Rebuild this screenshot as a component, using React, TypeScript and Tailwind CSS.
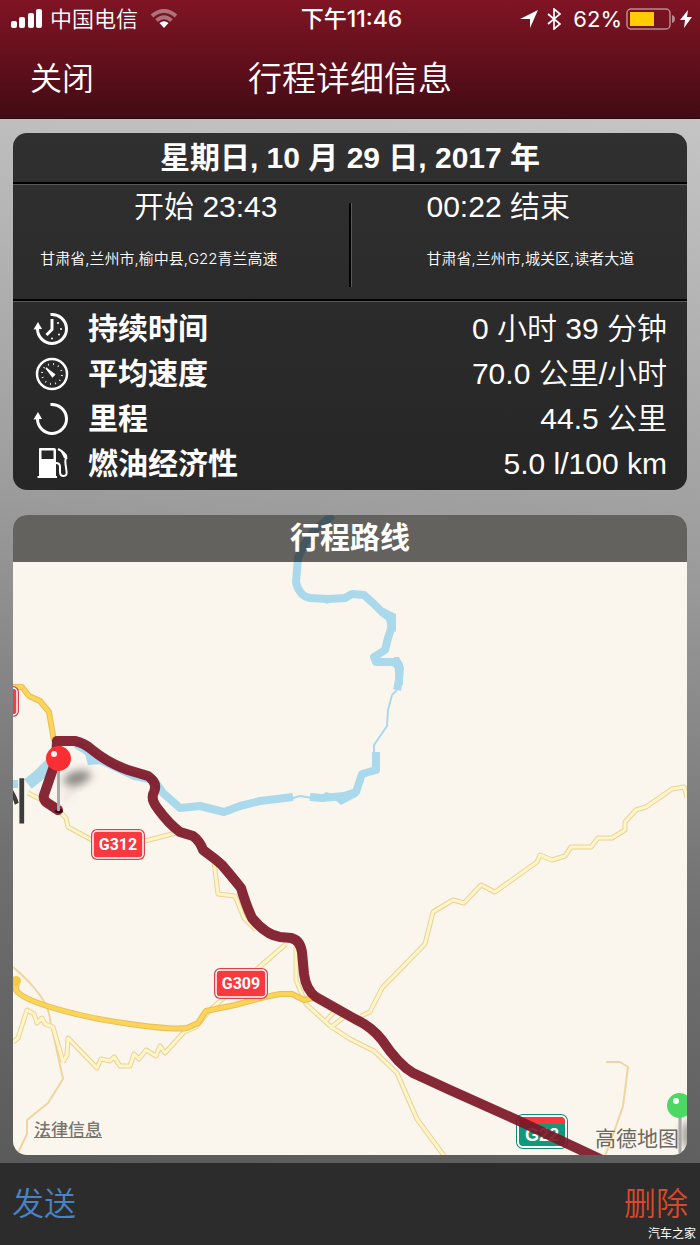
import React from 'react';

interface Stat {
  label: string;
  value: string;
  icon: React.ReactNode;
}

const DurationIcon = () => (
  <svg viewBox="0 0 36 36" className="h-9 w-9" fill="none" stroke="white">
    <path d="M17.5 3.5A14.5 14.5 0 1 1 4.5 18" strokeWidth="3" />
    <path d="M5 11L0.5 18.5L9 18Z" fill="white" stroke="none" />
    <path d="M19 8V18.5L13.5 24" strokeWidth="3" strokeLinejoin="round" />
    <g fill="white" stroke="none">
      <circle cx="25" cy="12" r="1" />
      <circle cx="28" cy="18" r="1" />
      <circle cx="26" cy="23.5" r="1" />
      <circle cx="19" cy="27.5" r="1" />
    </g>
  </svg>
);

const SpeedIcon = () => (
  <svg viewBox="0 0 36 36" className="h-9 w-9" fill="none" stroke="white">
    <circle cx="19" cy="18" r="15" strokeWidth="2.5" />
    <circle cx="19" cy="18" r="10" strokeWidth="2" strokeDasharray="1 5.5" strokeDashoffset="-21" pathLength="78" />
    <path d="M13 12L21.5 18.5L19.5 20.5Z" fill="white" strokeWidth="1.5" />
  </svg>
);

const DistanceIcon = () => (
  <svg viewBox="0 0 36 36" className="h-9 w-9" fill="none" stroke="white">
    <path d="M17.5 3.5A14.5 14.5 0 1 1 4.5 18" strokeWidth="3" />
    <path d="M5 11L0.5 18.5L9 18Z" fill="white" stroke="none" />
  </svg>
);

const FuelIcon = () => (
  <svg viewBox="0 0 36 36" className="h-9 w-9" fill="none" stroke="white">
    <path d="M7 2H21Q23 2 23 4V30H24V32H4.5V30H6V3Q6 2 7 2ZM8.5 4.5V13H20.5V4.5Z" fill="white" fillRule="evenodd" stroke="none" />
    <path d="M23 17Q27 17 27 21V26Q27 30 30.5 30Q34.5 30 33.5 25L32.5 18Q32 15 33 11Q33 7 25 3" strokeWidth="2" />
    <path d="M27 4L34 9L34.5 13L31 12L29 8Z" fill="white" stroke="none" />
  </svg>
);

const stats: Stat[] = [
  { label: '持续时间', value: '0 小时 39 分钟', icon: <DurationIcon /> },
  { label: '平均速度', value: '70.0 公里/小时', icon: <SpeedIcon /> },
  { label: '里程', value: '44.5 公里', icon: <DistanceIcon /> },
  { label: '燃油经济性', value: '5.0 l/100 km', icon: <FuelIcon /> },
];

const river = [
  'M333 515L314 530L304 545L298 558L296 582Q299 596 310 598L328 599L345 598L352 594L364 595L374 604L382 612L390 618L392 626L388 638L385 650L374 657L376 662L394 662L400 668L399 680L397 690',
  'M376 752V770L362 774L356 792L344 796L322 798L310 797',
  'M293 797L260 801L240 806L224 812L200 806L180 808L163 793L154 780L134 776L100 760L76 744',
];

const minorRoads = [
  'M28 793L54 806L66 818L68 827L92 840M145 841L180 832',
  'M214 862L218 894L235 896L244 918L256 930',
  'M286 944L256 970L210 1010L196 1027L184 1032L165 1053L160 1046L156 1056L146 1050L139 1059L134 1054L130 1066H120L114 1057L110 1061L101 1059L97 1068L68 1038L67 1055L63 1062',
  'M63 1062L53 1027L45 1024L42 1018L37 1023L34 1014L27 1010L18 1038L13 1042',
  'M296 947V980L306 1004L330 1026L350 1039L374 1051L397 1073L417 1119L445 1157',
  'M330 1028L348 1014M325 1022L334 1012',
  'M361 1016L370 1012L382 988L425 944L433 912L453 900L464 903L481 885L495 892L537 862L540 855L552 860L565 856L571 847H591L598 838L612 838L625 830V822L636 810L646 807L672 789L684 787L687 797',
];

const thinRoads = ['M13 967Q48 997 50 1019L63 1079L48 1103L27 1120V1134L17 1155', 'M606 1062H620L628 1067L623 1106L614 1132L605 1156'];

const mainRoads = ['M13 687H22L29 696L40 701L49 712L54 741', 'M17 979L16 990Q21 998 50 1007Q90 1019 130 1024Q172 1030 187 1028L198 1023L206 1011L235 1005L265 997L280 994H292L304 1000L318 997'];

const route =
  'M58 810L46 802Q43 799 44 795L56 760L57 741H75Q84 743 91 749Q108 763 128 770L148 776Q158 783 154 792Q150 799 158 809Q169 824 180 832L193 836Q200 841 203 850L215 859L222 865Q233 878 241 888Q246 905 252 918Q266 935 280 937L291 938Q300 940 302 952L304 974Q306 990 316 997L355 1019Q372 1027 382 1040Q398 1064 413 1073L450 1090L517 1120L600 1159';

const Shield = ({ x, y, label }: { x: number; y: number; label?: string }) => (
  <g>
    <rect x={x} y={y} width="54" height="31" rx="6" fill="#d8434a" />
    <rect x={x + 2} y={y + 2} width="50" height="27" rx="4" fill="#f8393d" stroke="white" strokeWidth="1.5" />
    {label && (
      <text x={x + 27} y={y + 21} textAnchor="middle" fill="white" fontSize="16" className="font-['Roboto','Liberation_Sans',sans-serif] font-bold">
        {label}
      </text>
    )}
  </g>
);

const RouteMap = () => (
  <svg viewBox="13 515 674 640" className="block h-auto w-full bg-[#faf6ee]" fill="none" strokeLinejoin="round">
    <defs>
      <filter id="pinShadow" x="-50%" y="-50%" width="200%" height="200%">
        <feGaussianBlur stdDeviation="4" />
      </filter>
    </defs>

    <g stroke="#abd9ec">
      {river.map((d) => (
        <path key={d} d={d} strokeWidth="8" />
      ))}
      <path d="M397 690L392 695L388 710L387 726L374 745V756M313 798L300 796L290 799" strokeWidth="2" />
      <path d="M28 784L38 776L50 764" strokeWidth="12" />
      <path d="M13 784H18" strokeWidth="8" />
    </g>
    <path
      d="M384 608L396 614V632L388 629ZM320 600L327 604L334 601ZM394 657H399L403 664V685L396 687ZM373 752L378 758V773L371 775ZM334 799L341 805L358 796L352 790ZM84 750L88 765L102 764ZM322 795L326 792L333 794Z"
      fill="#abd9ec"
    />

    {thinRoads.map((d) => (
      <path key={d} d={d} stroke="#f0d4a0" strokeWidth="2" />
    ))}
    {minorRoads.map((d) => (
      <path key={d} d={d} stroke="#ecd09a" strokeWidth="5" />
    ))}
    {minorRoads.map((d) => (
      <path key={d} d={d} stroke="#fdf6c6" strokeWidth="3" />
    ))}
    {mainRoads.map((d) => (
      <path key={d} d={d} stroke="#e8bd58" strokeWidth="6" />
    ))}
    {mainRoads.map((d) => (
      <path key={d} d={d} stroke="#fbd458" strokeWidth="4" />
    ))}
    <circle cx="16" cy="981" r="5" fill="#f6c944" />

    <Shield x={-35} y={686} />
    <Shield x={91} y={829} label="G312" />
    <Shield x={214} y={968} label="G309" />
    <text x="-21" y="820" fontSize="50" fill="#3c3c3c" className="font-['Noto_Sans_CJK_SC',sans-serif] font-medium">
      州
    </text>

    <g>
      <rect x="516" y="1114" width="52" height="35" rx="7" fill="#148a70" />
      <rect x="518" y="1116" width="48" height="31" rx="5" fill="#119878" stroke="white" strokeWidth="2" />
      <path d="M522 1117H562L565 1120V1124H519V1120Z" fill="#f8393d" />
      <text x="542" y="1141" textAnchor="middle" fill="white" fontSize="18" className="font-['Liberation_Sans',sans-serif] font-bold">
        G22
      </text>
    </g>

    <path d={route} stroke="#7d1626" strokeOpacity="0.92" strokeWidth="10" strokeLinecap="round" />

    {/* Pins */}
    <ellipse cx="77" cy="778" rx="14" ry="7" fill="black" fillOpacity="0.45" transform="rotate(-15 77 778)" filter="url(#pinShadow)" />
    <path d="M63 800L77 785" stroke="black" strokeOpacity="0.12" strokeWidth="4" filter="url(#pinShadow)" />
    <ellipse cx="59" cy="811" rx="4" ry="2" fill="#3c0710" />
    <path d="M58.5 768V811" stroke="#a8a8a8" strokeWidth="3" />
    <circle cx="58.5" cy="758.5" r="12.5" fill="#fb2f33" />
    <circle cx="54" cy="754" r="3" fill="#fff0ee" />
    <ellipse cx="690" cy="1135" rx="9" ry="14" fill="black" fillOpacity="0.35" filter="url(#pinShadow)" />
    <path d="M680 1115V1153" stroke="#a8a8a8" strokeWidth="3" />
    <circle cx="679.5" cy="1105.5" r="12.5" fill="#4bd964" />
    <circle cx="676" cy="1101" r="3" fill="white" />
  </svg>
);

const StatusBar = () => (
  <div className="grid h-[38px] grid-cols-[1fr_auto_1fr] items-center pr-2 pl-[11px] font-['Inter','Noto_Sans_CJK_SC',sans-serif] text-[22px] leading-[38px]">
    <div className="flex items-center gap-2">
      <svg viewBox="0 0 31 20" className="h-5 w-[31px]" fill="white">
        <rect x="0" y="12" width="6" height="7" rx="2" />
        <rect x="8" y="8" width="6" height="11" rx="2" />
        <rect x="17" y="4" width="6" height="15" rx="2" />
        <rect x="25" y="0" width="6" height="19" rx="2" />
      </svg>
      <span className="font-[350]">中国电信</span>
      <svg viewBox="0 0 28 20" className="ml-1 h-5 w-7" fill="none" stroke="white">
        <path d="M2 7Q14 -3 26 7" strokeWidth="4" strokeOpacity="0.4" />
        <path d="M6.5 11.5Q14 5 21.5 11.5" strokeWidth="4" strokeOpacity="0.4" />
        <path d="M9.5 14Q14 10.5 18.5 14L14 19Z" fill="white" stroke="none" />
      </svg>
    </div>
    <span className="text-[23px] font-medium">下午11:46</span>
    <div className="flex items-center justify-end">
      <svg viewBox="0 0 20 20" className="mr-2 h-5 w-5" fill="white">
        <path d="M19 1L11 19V10H1Z" />
      </svg>
      <svg viewBox="0 0 14 22" className="mr-3 h-[22px] w-3.5" fill="none" stroke="white" strokeWidth="1.7">
        <path d="M1 6L13 16L7 21V1L13 6L1 16" />
      </svg>
      <span>62%</span>
      <svg viewBox="0 0 50 22" className="ml-1 h-[22px] w-[50px]">
        <rect x="1" y="1" width="43" height="20" rx="4" fill="none" stroke="white" strokeOpacity="0.5" strokeWidth="1.5" />
        <rect x="4" y="4" width="24" height="14" fill="#ffcc00" />
        <path d="M46 7Q49 8 49 11Q49 14 46 15Z" fill="white" fillOpacity="0.5" />
      </svg>
      <svg viewBox="0 0 12 20" className="ml-1 h-5 w-3" fill="white">
        <path d="M8 1L0 11H5L4 19L12 8H7Z" />
      </svg>
    </div>
  </div>
);

export default function App() {
  return (
    <div className="relative flex min-h-screen flex-col bg-[linear-gradient(186deg,#c6c6c6_8%,#9d9d9d_42%,#707070_70%,#5a5a5a_94%)] font-['Liberation_Sans','Noto_Sans_CJK_SC',sans-serif] text-white">
      <header className="border-b border-[#2c0810] bg-linear-to-b from-[#801424] via-[#63101c] to-[#420b14]">
        <StatusBar />
        <div className="grid h-20 grid-cols-[1fr_auto_1fr] items-center px-[30px] pt-0.5">
          <button className="justify-self-start text-[32px] font-[350]">关闭</button>
          <h1 className="text-[34px] font-[350]">行程详细信息</h1>
        </div>
      </header>

      <main className="flex grow flex-col gap-[25px] px-[13px] pt-3.5 pb-2">
        <section className="overflow-hidden rounded-[14px] bg-linear-to-b from-[#303030] to-[#262626]">
          <h2 className="h-[51px] border-b-2 border-black text-center text-[30px] leading-[49px] font-bold">
            星期日, 10 月 29 日, 2017 年
          </h2>
          <div className="grid h-[117px] grid-cols-[1fr_3px_1fr] border-t border-b-2 border-t-[#5a5a5a] border-b-black">
            <div className="flex flex-col items-end gap-3 pr-[71px]">
              <p className="text-[30px] leading-[44px] font-[350]">开始 23:43</p>
              <p className="font-['Inter','Noto_Sans_CJK_SC',sans-serif] text-[15px] leading-9 font-[350] whitespace-nowrap">
                甘肃省,兰州市,榆中县,G22青兰高速
              </p>
            </div>
            <div className="mt-[18px] mb-3 border-r border-l-2 border-r-[#5a5a5a] border-l-black" />
            <div className="flex flex-col items-start gap-3 pl-[75px]">
              <p className="text-[30px] leading-[44px] font-[350]">00:22 结束</p>
              <p className="font-['Inter','Noto_Sans_CJK_SC',sans-serif] text-[15px] leading-9 font-[350] whitespace-nowrap">
                甘肃省,兰州市,城关区,读者大道
              </p>
            </div>
          </div>
          <dl className="border-t border-t-[#5a5a5a] px-5 py-1">
            {stats.map((stat) => (
              <div key={stat.label} className="flex h-[45px] items-center justify-between">
                <dt className="flex items-center gap-[19px] text-[30px] leading-[45px] font-bold">
                  {stat.icon}
                  {stat.label}
                </dt>
                <dd className="text-[30px] leading-[45px] font-[350]">{stat.value}</dd>
              </div>
            ))}
          </dl>
        </section>

        <section className="relative overflow-hidden rounded-[14px]">
          <RouteMap />
          <h2 className="absolute inset-x-0 top-0 h-[47px] bg-black/60 text-center text-[30px] leading-[46px] font-bold">行程路线</h2>
          <div className="absolute inset-x-0 bottom-0 flex items-end justify-between pr-2 pb-1 pl-[21px]">
            <a href="#legal" className="pb-2 text-[17px] font-medium text-[#77756f] underline">
              法律信息
            </a>
            <span className="text-[21px] leading-6 text-[#6a6862]">高德地图</span>
          </div>
        </section>
      </main>

      <footer className="flex h-[82px] items-center justify-between bg-[#2c2c2c] px-3 text-[32px] font-[350]">
        <button className="text-[#4b82c3]">发送</button>
        <button className="text-[#d9482b]">删除</button>
      </footer>
      <span className="absolute right-1 bottom-0.5 text-[12px] leading-[18px]">汽车之家</span>
    </div>
  );
}
